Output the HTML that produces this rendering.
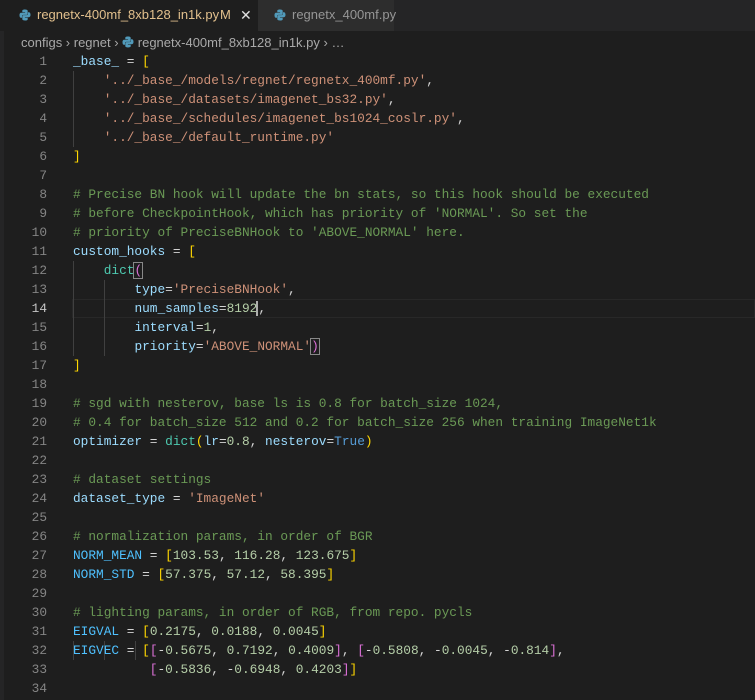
<!DOCTYPE html>
<html><head><meta charset="utf-8">
<style>
html,body{margin:0;padding:0;background:#1e1e1e;width:755px;height:700px;overflow:hidden;font-family:"Liberation Sans",sans-serif;}
#tabs{position:absolute;left:0;top:0;width:755px;height:31px;background:#252526;}
.tab{position:absolute;top:0;height:31px;line-height:30px;font-size:13px;}
#t1{left:0;width:258px;background:#1e1e1e;color:#e2c08d;}
#t2{left:258px;width:136px;background:#2d2d2d;color:#969696;}
.py{position:absolute;top:9px;width:12px;height:12px;}
#crumb{position:absolute;left:21px;top:34px;font-size:13px;color:#a9a9a9;line-height:18px;white-space:pre;}
#code{position:absolute;left:0;top:52px;font-family:"Liberation Mono",monospace;font-size:12.8px;line-height:19px;white-space:pre;color:#d4d4d4;}
.ln{display:inline-block;width:47px;text-align:right;color:#858585;margin-right:26px;}
.cur{color:#c6c6c6}
.v{color:#9cdcfe}.s{color:#ce9178}.c{color:#6a9955}.n{color:#b5cea8}.f{color:#4ec9b0}.k{color:#569cd6}.C{color:#4fc1ff}
.y{color:#ffd700}.p{color:#da70d6}.b{color:#179fff}
.g{position:absolute;width:1px;background:#404040;}
#hl{position:absolute;left:72px;top:299px;width:683px;height:19px;box-sizing:border-box;border:1px solid #282828;}
#left{position:absolute;left:0;top:31px;width:4px;height:669px;background:#252526;}
</style></head><body>
<div id="tabs">
 <div class="tab" id="t1">
  <svg class="py" style="left:19px" viewBox="0 0 12 12"><path d="M6 0.5C3 0.5 3.3 1.8 3.3 1.8V3.3H6.1V3.8H2.2S0.5 3.6 0.5 6.2 2 8.8 2 8.8H3V7.4S2.9 5.9 4.5 5.9H7.2S8.7 5.9 8.7 4.5V2S8.9 0.5 6 0.5Z" fill="#519aba"/><path d="M6 11.5C9 11.5 8.7 10.2 8.7 10.2V8.7H5.9V8.2H9.8S11.5 8.4 11.5 5.8 10 3.2 10 3.2H9V4.6S9.1 6.1 7.5 6.1H4.8S3.3 6.1 3.3 7.5V10S3.1 11.5 6 11.5Z" fill="#519aba"/></svg>
  <span style="position:absolute;left:37px">regnetx-400mf_8xb128_in1k.py</span>
  <span style="position:absolute;left:220px">M</span>
  <span style="position:absolute;left:240px;color:#e0e0e0;font-size:14px">✕</span>
 </div>
 <div class="tab" id="t2">
  <svg class="py" style="left:16px" viewBox="0 0 12 12"><path d="M6 0.5C3 0.5 3.3 1.8 3.3 1.8V3.3H6.1V3.8H2.2S0.5 3.6 0.5 6.2 2 8.8 2 8.8H3V7.4S2.9 5.9 4.5 5.9H7.2S8.7 5.9 8.7 4.5V2S8.9 0.5 6 0.5Z" fill="#519aba"/><path d="M6 11.5C9 11.5 8.7 10.2 8.7 10.2V8.7H5.9V8.2H9.8S11.5 8.4 11.5 5.8 10 3.2 10 3.2H9V4.6S9.1 6.1 7.5 6.1H4.8S3.3 6.1 3.3 7.5V10S3.1 11.5 6 11.5Z" fill="#519aba"/></svg>
  <span style="position:absolute;left:34px">regnetx_400mf.py</span>
 </div>
</div>
<div id="crumb">configs › regnet › <svg style="vertical-align:-1px" width="12" height="12" viewBox="0 0 12 12"><path d="M6 0.5C3 0.5 3.3 1.8 3.3 1.8V3.3H6.1V3.8H2.2S0.5 3.6 0.5 6.2 2 8.8 2 8.8H3V7.4S2.9 5.9 4.5 5.9H7.2S8.7 5.9 8.7 4.5V2S8.9 0.5 6 0.5Z" fill="#519aba"/><path d="M6 11.5C9 11.5 8.7 10.2 8.7 10.2V8.7H5.9V8.2H9.8S11.5 8.4 11.5 5.8 10 3.2 10 3.2H9V4.6S9.1 6.1 7.5 6.1H4.8S3.3 6.1 3.3 7.5V10S3.1 11.5 6 11.5Z" fill="#519aba"/></svg> regnetx-400mf_8xb128_in1k.py › …</div>
<div id="left"></div>
<div id="hl"></div>
<div class="g" style="left:73px;top:71px;height:76px"></div>
<div class="g" style="left:73px;top:261px;height:95px"></div>
<div class="g" style="left:104px;top:280px;height:76px"></div>
<div class="g" style="left:73px;top:641px;height:19px"></div>
<div class="g" style="left:104px;top:641px;height:19px"></div>
<div class="g" style="left:135px;top:641px;height:19px"></div>
<div id="code"><span class="ln">1</span><span class="v">_base_</span> = <span class="y">[</span>
<span class="ln">2</span>    <span class="s">'../_base_/models/regnet/regnetx_400mf.py'</span>,
<span class="ln">3</span>    <span class="s">'../_base_/datasets/imagenet_bs32.py'</span>,
<span class="ln">4</span>    <span class="s">'../_base_/schedules/imagenet_bs1024_coslr.py'</span>,
<span class="ln">5</span>    <span class="s">'../_base_/default_runtime.py'</span>
<span class="ln">6</span><span class="y">]</span>
<span class="ln">7</span>
<span class="ln">8</span><span class="c"># Precise BN hook will update the bn stats, so this hook should be executed</span>
<span class="ln">9</span><span class="c"># before CheckpointHook, which has priority of 'NORMAL'. So set the</span>
<span class="ln">10</span><span class="c"># priority of PreciseBNHook to 'ABOVE_NORMAL' here.</span>
<span class="ln">11</span><span class="v">custom_hooks</span> = <span class="y">[</span>
<span class="ln">12</span>    <span class="f">dict</span><span class="p" style="outline:1px solid #888">(</span>
<span class="ln">13</span>        <span class="v">type</span>=<span class="s">'PreciseBNHook'</span>,
<span class="ln cur">14</span>        <span class="v">num_samples</span>=<span class="n">8192</span><span style="border-left:2px solid #aeafad;margin-left:-1px"></span>,
<span class="ln">15</span>        <span class="v">interval</span>=<span class="n">1</span>,
<span class="ln">16</span>        <span class="v">priority</span>=<span class="s">'ABOVE_NORMAL'</span><span class="p" style="outline:1px solid #888">)</span>
<span class="ln">17</span><span class="y">]</span>
<span class="ln">18</span>
<span class="ln">19</span><span class="c"># sgd with nesterov, base ls is 0.8 for batch_size 1024,</span>
<span class="ln">20</span><span class="c"># 0.4 for batch_size 512 and 0.2 for batch_size 256 when training ImageNet1k</span>
<span class="ln">21</span><span class="v">optimizer</span> = <span class="f">dict</span><span class="y">(</span><span class="v">lr</span>=<span class="n">0.8</span>, <span class="v">nesterov</span>=<span class="k">True</span><span class="y">)</span>
<span class="ln">22</span>
<span class="ln">23</span><span class="c"># dataset settings</span>
<span class="ln">24</span><span class="v">dataset_type</span> = <span class="s">'ImageNet'</span>
<span class="ln">25</span>
<span class="ln">26</span><span class="c"># normalization params, in order of BGR</span>
<span class="ln">27</span><span class="C">NORM_MEAN</span> = <span class="y">[</span><span class="n">103.53</span>, <span class="n">116.28</span>, <span class="n">123.675</span><span class="y">]</span>
<span class="ln">28</span><span class="C">NORM_STD</span> = <span class="y">[</span><span class="n">57.375</span>, <span class="n">57.12</span>, <span class="n">58.395</span><span class="y">]</span>
<span class="ln">29</span>
<span class="ln">30</span><span class="c"># lighting params, in order of RGB, from repo. pycls</span>
<span class="ln">31</span><span class="C">EIGVAL</span> = <span class="y">[</span><span class="n">0.2175</span>, <span class="n">0.0188</span>, <span class="n">0.0045</span><span class="y">]</span>
<span class="ln">32</span><span class="C">EIGVEC</span> = <span class="y">[</span><span class="p">[</span>-<span class="n">0.5675</span>, <span class="n">0.7192</span>, <span class="n">0.4009</span><span class="p">]</span>, <span class="p">[</span>-<span class="n">0.5808</span>, -<span class="n">0.0045</span>, -<span class="n">0.814</span><span class="p">]</span>,
<span class="ln">33</span>          <span class="p">[</span>-<span class="n">0.5836</span>, -<span class="n">0.6948</span>, <span class="n">0.4203</span><span class="p">]</span><span class="y">]</span>
<span class="ln">34</span>
</div>
</body></html>
